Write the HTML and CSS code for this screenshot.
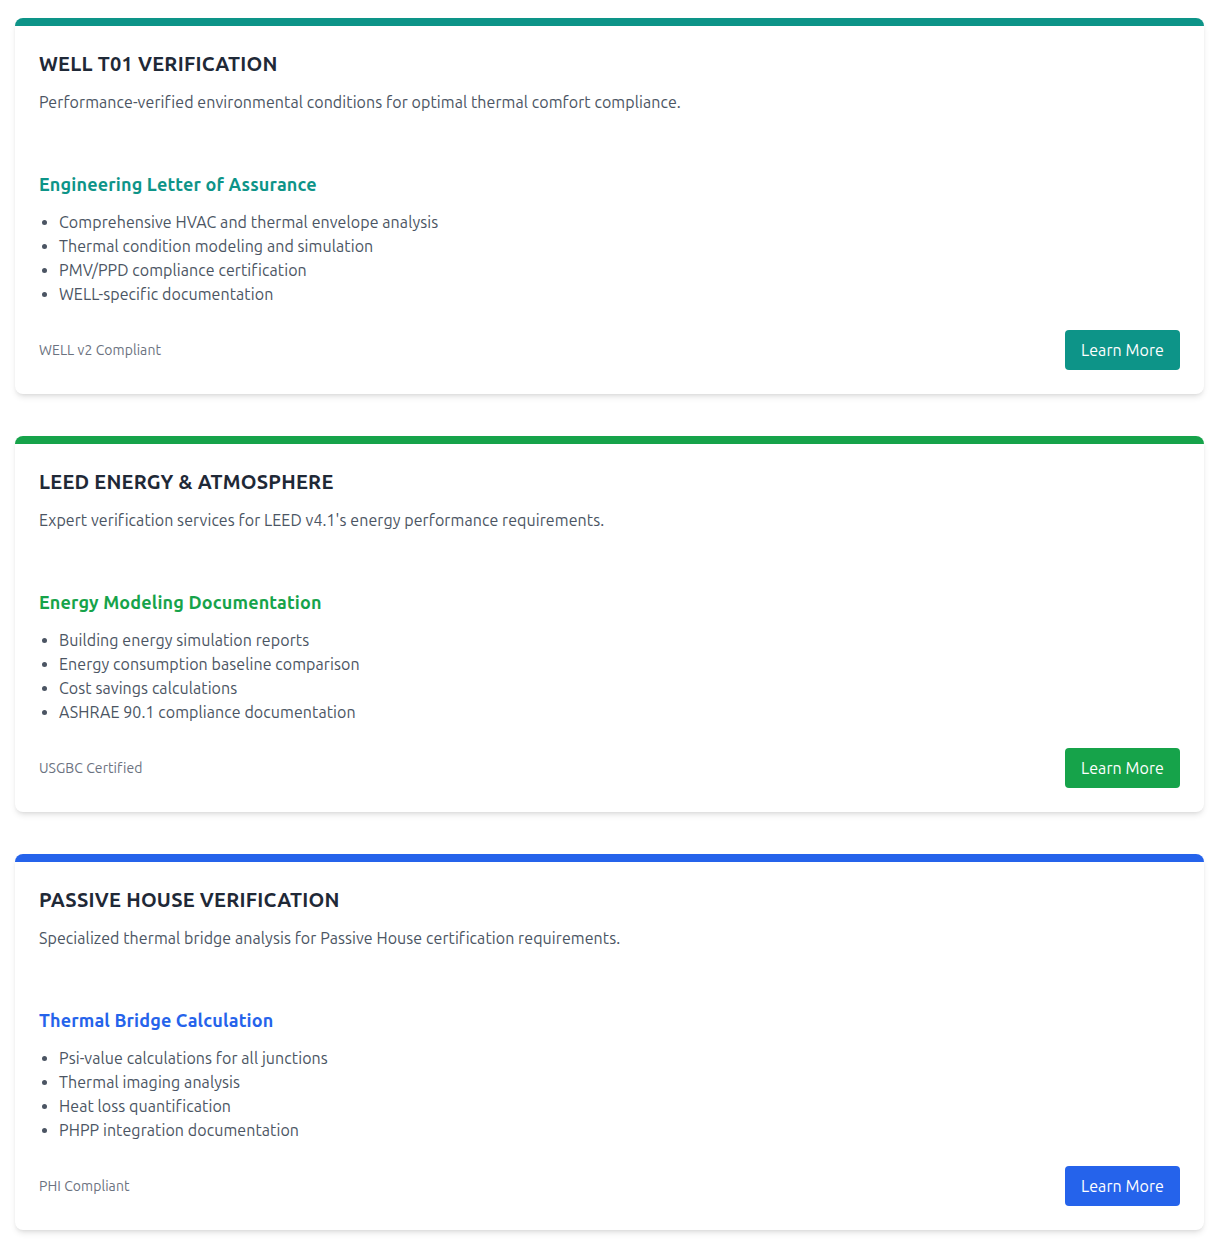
FILE: index.html
```html
<!DOCTYPE html>
<html lang="en">
<head>
<meta charset="utf-8">
<title>Verification Services</title>
<link rel="stylesheet" href="styles.css">
</head>
<body>
<main class="page">
  <section class="card card-teal">
    <h2 class="card-title">WELL T01 VERIFICATION</h2>
    <p class="card-desc">Performance-verified environmental conditions for optimal thermal comfort compliance.</p>
    <h3 class="card-sub">Engineering Letter of Assurance</h3>
    <ul class="card-list">
      <li>Comprehensive HVAC and thermal envelope analysis</li>
      <li>Thermal condition modeling and simulation</li>
      <li>PMV/PPD compliance certification</li>
      <li>WELL-specific documentation</li>
    </ul>
    <div class="card-foot">
      <span class="badge">WELL v2 Compliant</span>
      <a class="btn" href="#">Learn More</a>
    </div>
  </section>
  <section class="card card-green">
    <h2 class="card-title">LEED ENERGY &amp; ATMOSPHERE</h2>
    <p class="card-desc">Expert verification services for LEED v4.1's energy performance requirements.</p>
    <h3 class="card-sub">Energy Modeling Documentation</h3>
    <ul class="card-list">
      <li>Building energy simulation reports</li>
      <li>Energy consumption baseline comparison</li>
      <li>Cost savings calculations</li>
      <li>ASHRAE 90.1 compliance documentation</li>
    </ul>
    <div class="card-foot">
      <span class="badge">USGBC Certified</span>
      <a class="btn" href="#">Learn More</a>
    </div>
  </section>
  <section class="card card-blue">
    <h2 class="card-title">PASSIVE HOUSE VERIFICATION</h2>
    <p class="card-desc">Specialized thermal bridge analysis for Passive House certification requirements.</p>
    <h3 class="card-sub">Thermal Bridge Calculation</h3>
    <ul class="card-list">
      <li>Psi-value calculations for all junctions</li>
      <li>Thermal imaging analysis</li>
      <li>Heat loss quantification</li>
      <li>PHPP integration documentation</li>
    </ul>
    <div class="card-foot">
      <span class="badge">PHI Compliant</span>
      <a class="btn" href="#">Learn More</a>
    </div>
  </section>
</main>
</body>
</html>
```
FILE: styles.css
```css
* { box-sizing: border-box; }
html, body { margin: 0; padding: 0; background: #ffffff; }
body {
  font-family: "Ubuntu", "Open Sans", "Noto Sans", sans-serif;
  color: #4b5563;
}
.page {
  padding: 18px 23px 18px 15px;
  display: flex;
  flex-direction: column;
  gap: 42px;
}
.card {
  --accent: #0d9488;
  background: #fff;
  border-top: 8px solid var(--accent);
  border-radius: 8px;
  box-shadow: 0 4px 6px -1px rgba(0,0,0,0.1), 0 2px 4px -2px rgba(0,0,0,0.1);
  padding: 24px;
}
.card-teal { --accent: #0d9488; }
.card-green { --accent: #16a34a; }
.card-blue { --accent: #2563eb; }
.card-title {
  margin: 0 0 12px;
  font-size: 20px;
  line-height: 28px;
  font-weight: 700;
  letter-spacing: 0.24px;
  color: #1f2937;
}
.card-desc {
  margin: 0 0 56px;
  font-size: 16px;
  line-height: 24px;
  letter-spacing: 0.08px;
  color: #4b5563;
}
.card-sub {
  margin: 0 0 12px;
  font-size: 18px;
  line-height: 28px;
  font-weight: 700;
  letter-spacing: 0.16px;
  color: var(--accent);
}
.card-list {
  margin: 0 0 24px;
  padding-left: 20px;
  list-style: disc;
  font-size: 16px;
  line-height: 24px;
  letter-spacing: 0.08px;
  color: #4b5563;
}
.card-foot {
  display: flex;
  justify-content: space-between;
  align-items: center;
}
.badge {
  font-size: 14px;
  line-height: 20px;
  letter-spacing: 0.06px;
  color: #6b7280;
}
.btn {
  display: inline-block;
  background: var(--accent);
  color: #fff;
  text-decoration: none;
  font-size: 16px;
  line-height: 24px;
  letter-spacing: 0.08px;
  padding: 8px 16px;
  border-radius: 4px;
}
```
